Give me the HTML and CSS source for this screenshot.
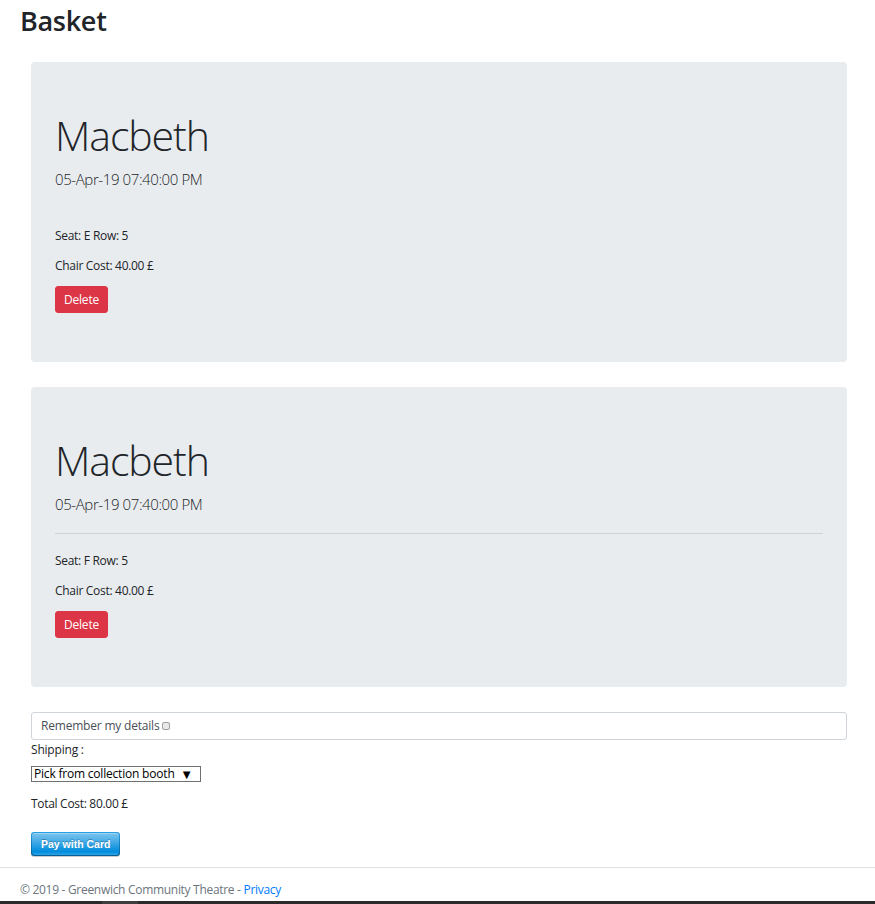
FILE: index.html
```html
<!DOCTYPE html>
<html lang="en">
<head>
<meta charset="utf-8">
<title>Basket</title>
<link rel="stylesheet" href="styles.css">
</head>
<body>
<h2 class="page-title">Basket</h2>
<main class="container">
  <section class="jumbotron">
    <h1 class="display">Macbeth</h1>
    <p class="lead">05-Apr-19 07:40:00 PM</p>
    <hr class="divider divider-hidden">
    <p class="info">Seat: E Row: 5</p>
    <p class="info">Chair Cost: 40.00 £</p>
    <button class="btn-delete" type="button">Delete</button>
  </section>
  <section class="jumbotron">
    <h1 class="display">Macbeth</h1>
    <p class="lead">05-Apr-19 07:40:00 PM</p>
    <hr class="divider">
    <p class="info">Seat: F Row: 5</p>
    <p class="info">Chair Cost: 40.00 £</p>
    <button class="btn-delete" type="button">Delete</button>
  </section>
  <form class="checkout">
    <label class="remember">Remember my details <input type="checkbox" class="check"></label>
    <div class="ship-label">Shipping :</div>
    <span class="select-wrap">
      <select class="ship-select"><option>Pick from collection booth</option></select>
    </span>
    <p class="total">Total Cost: 80.00 £</p>
    <button class="stripe-btn" type="button"><span class="stripe-inner">Pay with Card</span></button>
  </form>
</main>
<footer class="footer">
  <div class="footer-text">© 2019 - Greenwich Community Theatre - <a href="#" class="link">Privacy</a></div>
</footer>
<div class="bottom-bar"><span class="bar-thumb"></span></div>
</body>
</html>
```
FILE: styles.css
```css
html, body {
  margin: 0;
  padding: 0;
  overflow: hidden;
  height: 904px;
}
body {
  font-family: "Open Sans", "Noto Sans", Arial, sans-serif;
  font-size: 12px;
  line-height: 18px;
  color: #212529;
  background: #fff;
}
.page-title {
  margin: 5px 0 0 20px;
  font-size: 27px;
  line-height: 32px;
  font-weight: 600;
  letter-spacing: -0.3px;
  height: 57px;
}
.container {
  padding: 0 28px 0 31px;
}
.jumbotron {
  background: #e9ecef;
  border-radius: 4px;
  padding: 48px 24px 48px 24px;
  margin-bottom: 25px;
  height: 204px;
}
.display {
  margin: 0 0 8px 0;
  font-size: 41px;
  line-height: 50px;
  font-weight: 300;
  letter-spacing: -1.1px;
}
.lead {
  margin: 0;
  font-size: 15px;
  line-height: 22px;
  font-weight: 300;
  letter-spacing: -0.4px;
}
.divider {
  margin: 18px 0;
  border: 0;
  border-top: 1px solid rgba(0,0,0,.1);
}
.divider-hidden {
  border-top-color: transparent;
}
.info {
  margin: 0 0 12px 0;
  font-size: 12px;
  line-height: 18px;
  letter-spacing: -0.3px;
}
.btn-delete {
  display: block;
  box-sizing: border-box;
  height: 27px;
  margin-top: -1px;
  background: #dc3545;
  color: #fff;
  border: 1px solid #dc3545;
  border-radius: 3px;
  font-family: inherit;
  font-size: 12px;
  line-height: 18px;
  padding: 3px 8px;
  letter-spacing: -0.2px;
}
.checkout {
  margin-top: 1px;
}
.remember {
  display: block;
  border: 1px solid #ced4da;
  border-radius: 3px;
  padding: 4px 9px;
  line-height: 18px;
  color: #495057;
  letter-spacing: -0.2px;
}
.check {
  appearance: none;
  -webkit-appearance: none;
  width: 8px;
  height: 8px;
  margin: 0;
  border: 1px solid #a0a0a0;
  border-radius: 2px;
  background: #e8e8e8;
  vertical-align: 0;
}
.ship-label {
  margin-top: 1px;
  line-height: 18px;
  color: #212529;
  letter-spacing: -0.2px;
}
.select-wrap {
  display: inline-block;
  position: relative;
  margin-top: 7px;
}
.ship-select {
  appearance: none;
  -webkit-appearance: none;
  display: block;
  width: 170px;
  height: 16px;
  padding: 0 0 0 2px;
  margin: 0;
  border: 1px solid #707070;
  border-radius: 0;
  background: #fff;
  color: #000;
  font-family: inherit;
  font-size: 12px;
  line-height: 14px;
  letter-spacing: -0.2px;
}
.select-wrap::after {
  content: "▼";
  position: absolute;
  right: 8px;
  top: 0;
  font-size: 13px;
  line-height: 16px;
  color: #000;
  pointer-events: none;
}
.total {
  margin: 12px 0 0 0;
  line-height: 18px;
  letter-spacing: -0.3px;
}
.stripe-btn {
  display: block;
  margin-top: 19px;
  padding: 1px;
  border: 0;
  border-radius: 3px;
  background: linear-gradient(#28a0e5, #015e94);
  box-shadow: 0 1px 0 rgba(0,0,0,.2);
  cursor: pointer;
}
.stripe-inner {
  display: block;
  height: 22px;
  line-height: 22px;
  padding: 0 9px;
  border-radius: 3px;
  background: linear-gradient(#7dc5ee, #008cdd 85%, #30a2e4);
  box-shadow: inset 0 1px 0 rgba(255,255,255,.25);
  color: #fff;
  font-family: "Liberation Sans", Arial, Helvetica, sans-serif;
  font-weight: bold;
  font-size: 10.5px;
  text-shadow: 0 -1px 0 rgba(0,0,0,.25);
}
.footer {
  margin-top: 11px;
  border-top: 1px solid #dee2e6;
  padding: 8px 0 0 20px;
  color: #6c757d;
}
.footer-text {
  line-height: 28px;
  letter-spacing: -0.3px;
}
.link {
  color: #007bff;
  text-decoration: none;
}
.bottom-bar {
  position: fixed;
  left: 0;
  right: 0;
  bottom: 0;
  height: 3px;
  background: #2b2b2b;
}
.bar-thumb {
  position: absolute;
  left: 102px;
  width: 36px;
  top: 0;
  height: 3px;
  background: #3e3e3e;
}
```
